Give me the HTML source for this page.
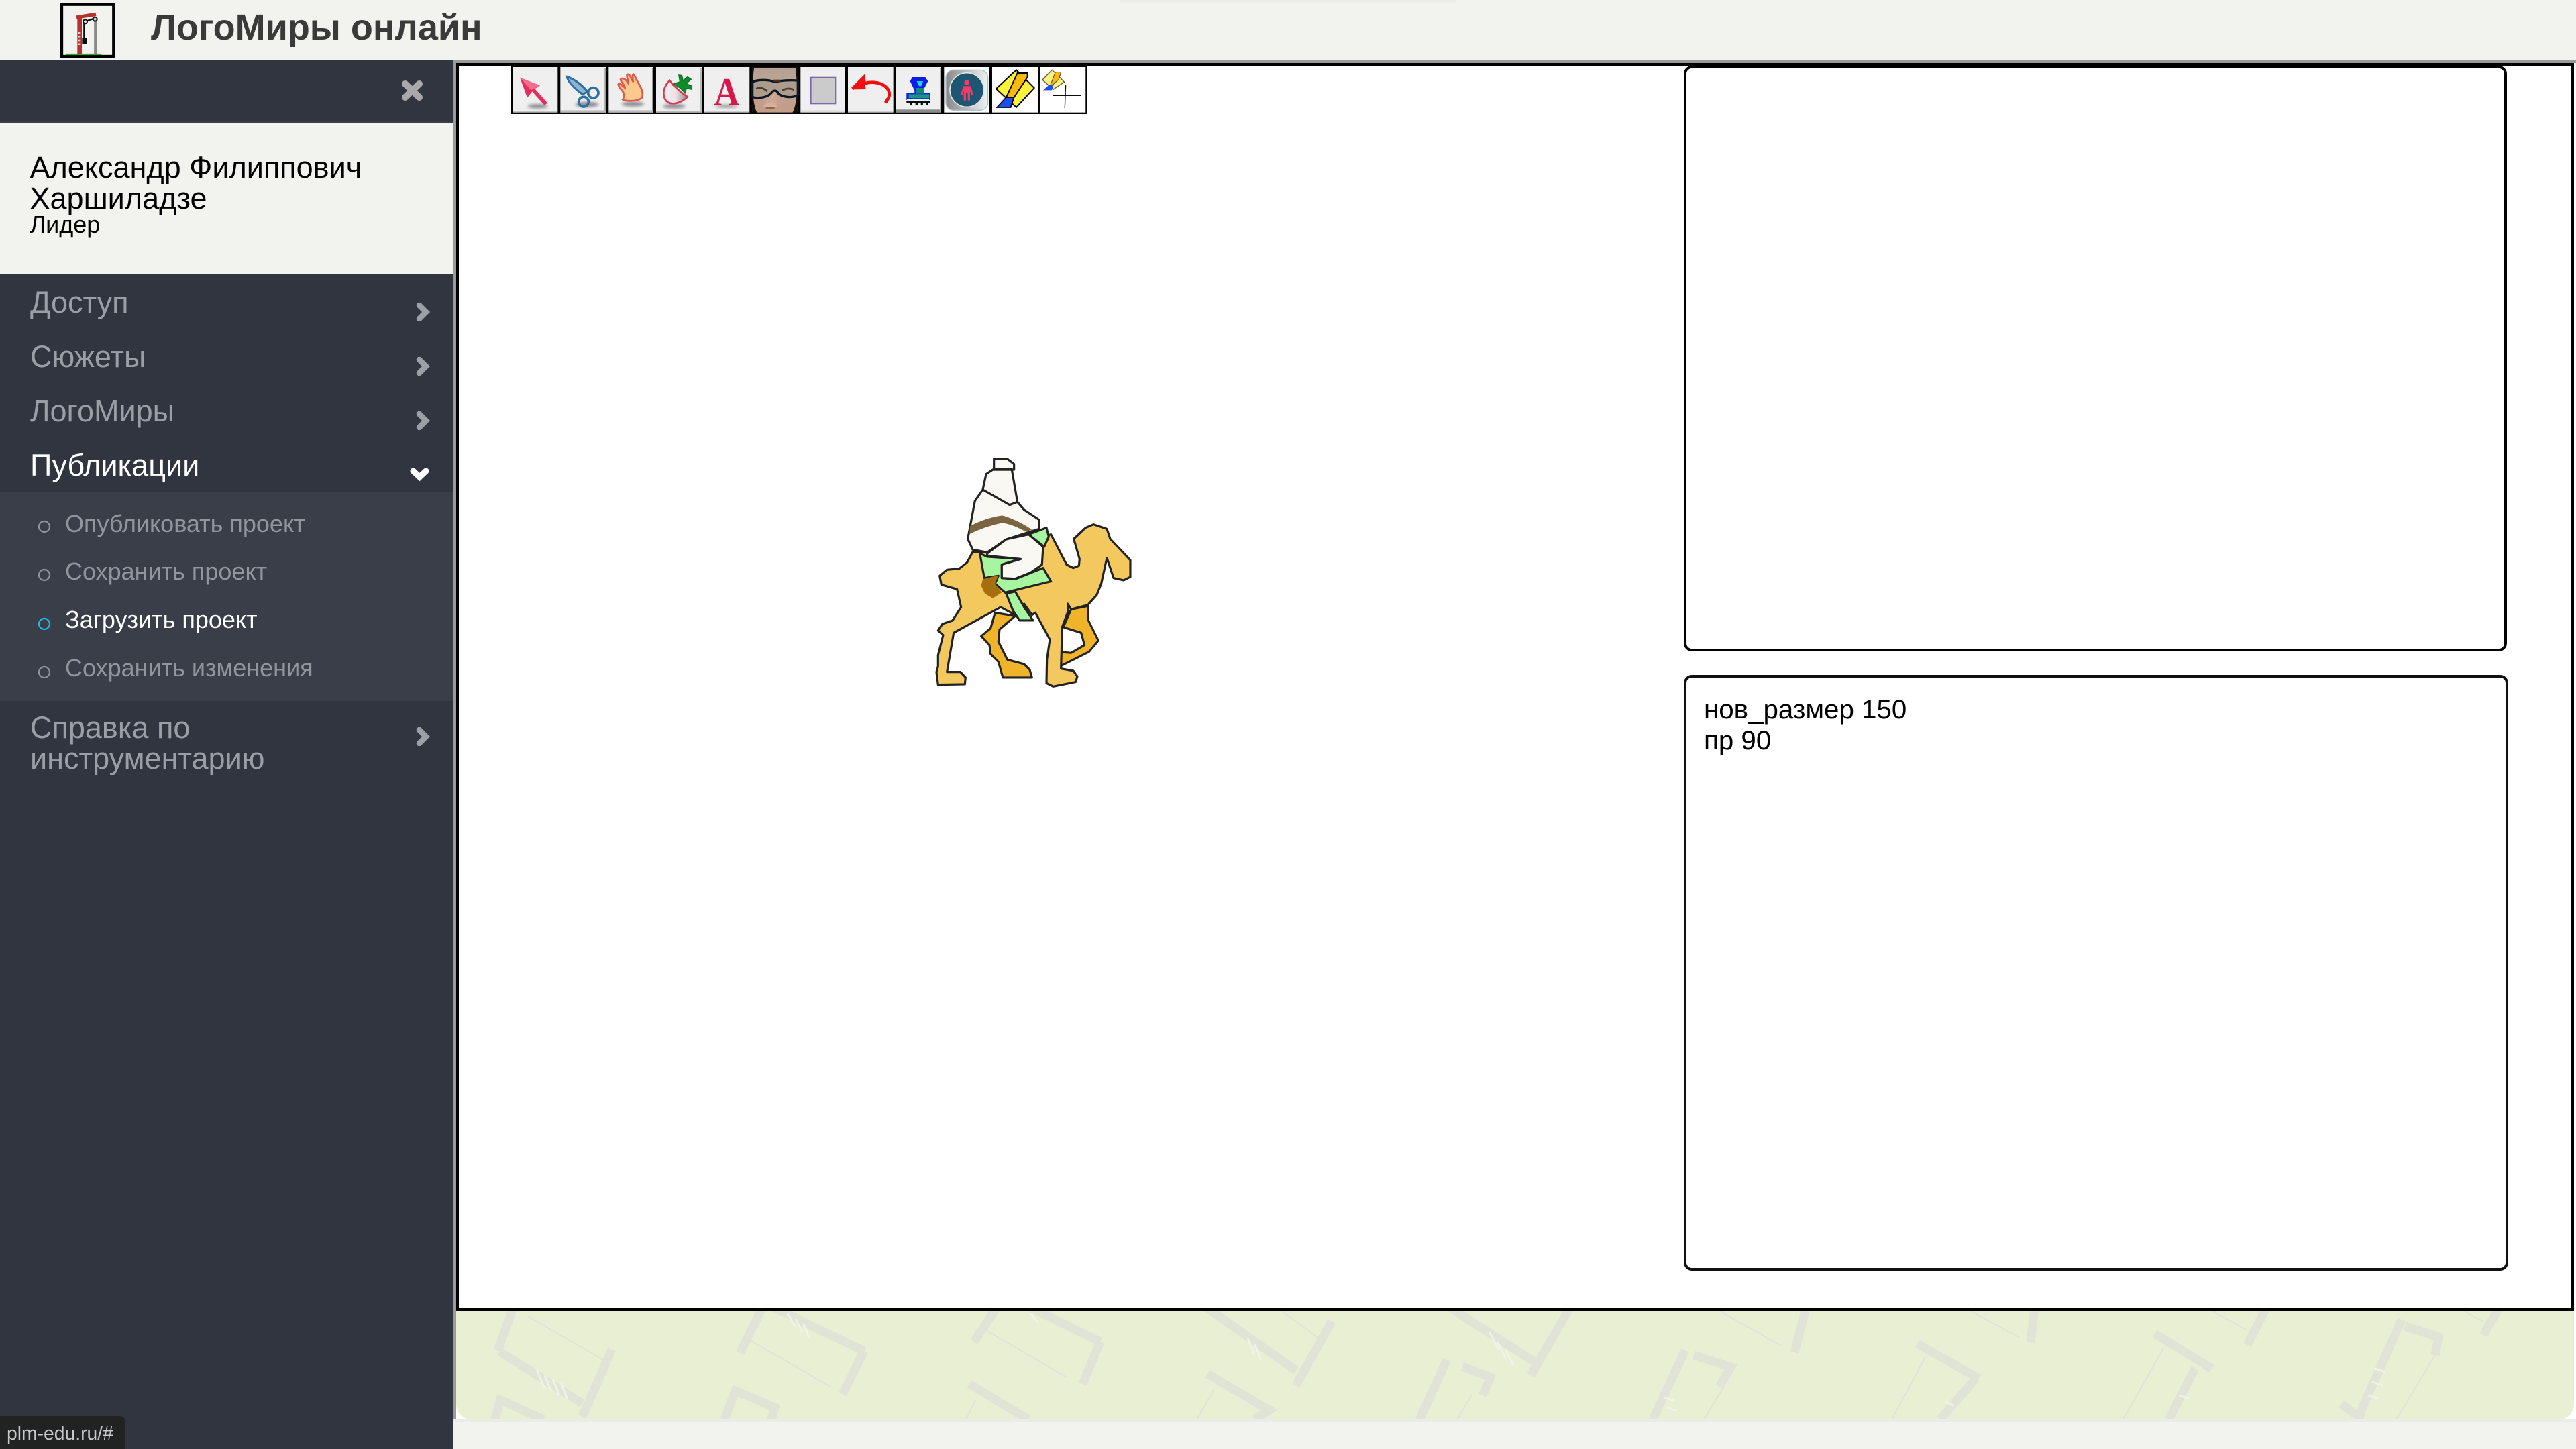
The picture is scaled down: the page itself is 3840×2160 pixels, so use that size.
<!DOCTYPE html>
<html lang="ru"><head><meta charset="utf-8"><title>ЛогоМиры онлайн</title>
<style>
html,body{margin:0;padding:0;width:3840px;height:2160px;overflow:hidden;background:#fff;font-family:"Liberation Sans",Arial,sans-serif}
.r{position:absolute}
.t{position:absolute;white-space:nowrap;line-height:1}
.m{font-size:45px;color:#9a9ea5;left:45px}
.s{font-size:36px;color:#92969c;left:97px}
.p{border:4px solid #000;border-radius:12px;box-sizing:border-box;background:#fff}
svg{position:absolute;left:0;top:0}
</style></head><body>
<div class="r" style="left:0;top:0;width:3840px;height:90px;background:#f2f2ee"></div>
<div class="r" style="left:1670px;top:0;width:500px;height:3px;background:#ecece8"></div>
<div class="r" style="left:676px;top:90px;width:3164px;height:4px;background:#9a9a9a"></div>
<div class="r" style="left:676px;top:90px;width:4px;height:2030px;background:#9a9a9a"></div>
<div class="r" style="left:0;top:90px;width:676px;height:2070px;background:#31353f"></div>
<div class="r" style="left:0;top:181px;width:676px;height:2px;background:#3a3e48"></div>
<div class="r" style="left:0;top:183px;width:676px;height:225px;background:#f2f2ee"></div>
<div class="r" style="left:0;top:733px;width:676px;height:312px;background:#3a3e48"></div>
<div class="r" style="left:676px;top:2116px;width:3164px;height:44px;background:#f2f2ee"></div>
<div class="r" style="left:676px;top:2116px;width:3164px;height:4px;background:#ebebe8"></div>
<div class="r" style="left:680px;top:1954px;width:3157px;height:162px;background:#e8efd3;border-radius:0 0 22px 22px"></div>
<div class="r" style="left:680px;top:94px;width:3157px;height:1860px;box-sizing:border-box;border:4px solid #000;background:#fff"></div>
<div class="r p" style="left:2510px;top:98px;width:1227px;height:873px"></div>
<div class="r p" style="left:2510px;top:1006px;width:1229px;height:888px;border-color:#111"></div>

<svg width="3840" height="2160" viewBox="0 0 3840 2160" xmlns="http://www.w3.org/2000/svg">
<defs>
<filter id="b1" x="-5%" y="-5%" width="110%" height="110%"><feGaussianBlur stdDeviation="0.6"/></filter>
<filter id="c1" x="-5%" y="-5%" width="110%" height="110%"><feGaussianBlur stdDeviation="0.8"/></filter>
<filter id="b2" x="-30%" y="-80%" width="160%" height="260%"><feGaussianBlur stdDeviation="6"/></filter>
<filter id="b3" x="-20%" y="-20%" width="140%" height="140%"><feGaussianBlur stdDeviation="8"/></filter>
<linearGradient id="ap" x1="0" x2="1"><stop offset="0" stop-color="#f8eef2"/><stop offset=".5" stop-color="#efe0e4"/><stop offset="1" stop-color="#8a8a8a"/></linearGradient>
<linearGradient id="pb" x1="0" x2="1"><stop offset="0" stop-color="#888"/><stop offset=".6" stop-color="#c8c8c8"/><stop offset="1" stop-color="#eef3f5"/></linearGradient>
<linearGradient id="fc" x1="0" x2="0" y1="0" y2="1"><stop offset="0" stop-color="#b5a294"/><stop offset=".35" stop-color="#bba596"/><stop offset="1" stop-color="#c49c86"/></linearGradient>
</defs>

<!-- logo -->
<g transform="translate(88,2) scale(.3333)" filter="url(#b1)">
<rect x="12" y="14" width="232" height="232" fill="#f2f2ee" stroke="#000" stroke-width="13"/>
<path d="M92 72V236" stroke="#b5302f" stroke-width="20" fill="none"/>
<path d="M92 136V200" stroke="#e8c8c4" stroke-width="10" stroke-dasharray="8 9" fill="none"/>
<path d="M78 72L165 58" stroke="#b5302f" stroke-width="16" fill="none"/>
<path d="M163 82V236" stroke="#8a8a88" stroke-width="13" fill="none"/>
<path d="M117 90L160 76" stroke="#111" stroke-width="7"/>
<circle cx="117" cy="91" r="9" fill="#ddd" stroke="#111" stroke-width="6"/>
<circle cx="161" cy="80" r="9" fill="#ccc" stroke="#111" stroke-width="6"/>
<path d="M112 95V168" stroke="#111" stroke-width="7"/>
<rect x="103" y="164" width="21" height="27" fill="#111"/>
<path d="M32 237H190" stroke="#39a02e" stroke-width="7"/>
</g>

<!-- sidebar icons -->
<path d="M604 125L625 145M625 125L604 145" stroke="#a9a9a9" stroke-width="10" stroke-linecap="round" fill="none"/>
<g fill="none" stroke="#9b9fa6" stroke-width="8.5" stroke-linecap="round">
<path d="M625 455L635 465L625 475"/><path d="M625 536L635 546L625 556"/><path d="M625 617L635 627L625 637"/><path d="M625 1088L635 1098L625 1108"/>
<path d="M616 702L625.5 711L635 702" stroke="#fff" stroke-width="9"/>
</g>
<g fill="none" stroke="#8f949b" stroke-width="2.2">
<circle cx="66" cy="785" r="8"/><circle cx="66" cy="857" r="8"/><circle cx="66" cy="930" r="8" stroke="#22b8f0"/><circle cx="66" cy="1002" r="8"/>
</g>

<!-- toolbar -->
<rect x="762" y="97" width="859" height="73" fill="#000"/>
<g transform="translate(760,95) scale(.3333)" filter="url(#b1)">
<g fill="#efefef">
<rect x="12" y="15" width="202" height="203"/><rect x="226" y="15" width="204" height="203"/><rect x="442" y="15" width="200" height="203"/><rect x="654" y="15" width="204" height="203"/><rect x="870" y="15" width="202" height="203"/>
</g>
<g fill="none" stroke="#9a9a9a" stroke-width="6">
<path d="M227 212H427V20"/><path d="M443 212H639V20"/><path d="M655 213H855V20" stroke="#bbb"/><path d="M15 214H212" stroke="#c4c4c4"/><path d="M871 214H1070" stroke="#ccc"/>
</g>
<ellipse cx="125" cy="190" rx="45" ry="10" fill="#8d8d96" filter="url(#b2)"/>
<path d="M45 62L135 97L112 112L168 175L155 186L100 124L78 152Z" fill="#e62f5d"/>
<path d="M45 62L135 97L95 118Z" fill="#f2708c"/>
<ellipse cx="345" cy="182" rx="52" ry="12" fill="#8d8d96" filter="url(#b2)"/>
<path d="M255 58C290 68 328 100 348 125L325 137C295 115 262 85 255 58Z" fill="#8fb4d4" stroke="#2d6f9e" stroke-width="9"/>
<circle cx="373" cy="130" r="23" fill="none" stroke="#2d6f9e" stroke-width="11"/>
<circle cx="330" cy="170" r="22" fill="none" stroke="#2d6f9e" stroke-width="11"/>
<ellipse cx="550" cy="180" rx="50" ry="11" fill="#8d8d96" filter="url(#b2)"/>
<path d="M505 160C520 168 575 170 592 150C600 120 580 100 555 48C548 42 548 60 552 82C540 60 535 45 525 48C520 55 530 75 530 88C520 70 505 60 495 70C495 80 515 95 515 108C500 95 490 85 485 92C490 120 525 125 505 160Z" fill="#fdc98c" stroke="#dd5a4e" stroke-width="8"/>
<ellipse cx="735" cy="190" rx="50" ry="10" fill="#8d8d96" filter="url(#b2)"/>
<path d="M715 75C690 100 680 130 695 160C715 190 760 180 795 148L770 130L730 95Z" fill="url(#ap)" stroke="#d53a54" stroke-width="8"/>
<path d="M730 90L760 80L755 50L770 52L775 75L795 58L812 70L790 88L815 100L812 115L790 110L785 132L760 108Z" fill="#0f8a2c" stroke="#0f6a20" stroke-width="3"/>
<ellipse cx="970" cy="190" rx="50" ry="7" fill="#9a9a9a" filter="url(#b2)"/>
<text transform="translate(970,186) scale(.88,1)" text-anchor="middle" font-family="Liberation Serif,serif" font-weight="700" font-size="178" fill="#d8124a">A</text>
<rect x="1082" y="15" width="206" height="203" fill="#120e0a"/>
<path d="M1092 20H1278C1286 90 1288 170 1265 218H1105C1083 170 1084 90 1092 20Z" fill="url(#fc)"/>
<path d="M1178 125L1140 185H1195L1188 125Z" fill="#cfa895" filter="url(#b3)"/>
<ellipse cx="1165" cy="188" rx="30" ry="12" fill="#d8b09c" filter="url(#b1)"/>
<ellipse cx="1165" cy="198" rx="22" ry="4" fill="#8c6654" filter="url(#b1)"/>
<path d="M1085 82C1110 68 1165 72 1185 82C1210 74 1265 72 1288 76V140C1265 155 1215 150 1200 132C1195 118 1180 115 1170 130C1150 155 1100 155 1085 148Z" fill="#ab9c8b" stroke="#0e1722" stroke-width="10"/>
<path d="M1102 112C1120 102 1140 112 1152 124M1218 120C1235 108 1255 110 1270 116" fill="none" stroke="#4a3e34" stroke-width="8"/>
<path d="M1180 76H1210" stroke="#4a2e1e" stroke-width="10"/>
</g>
<g transform="translate(1190,95) scale(.3333)" filter="url(#b1)">
<g fill="#efefef">
<rect x="10" y="15" width="200" height="203"/><rect x="222" y="15" width="203" height="203"/><rect x="438" y="15" width="200" height="203"/>
<rect x="652" y="15" width="203" height="203" fill="#fff"/><rect x="867" y="15" width="205" height="203" fill="#fff"/><rect x="1080" y="15" width="205" height="203" fill="#fff"/>
</g>
<path d="M10 212H210M222 214H425" stroke="#cfcfcf" stroke-width="6"/>
<rect x="438" y="205" width="200" height="13" fill="#8a8a8a"/><path d="M636 20V216" stroke="#aaa" stroke-width="5"/>
<rect x="56" y="62" width="110" height="116" fill="#cbcbcb" stroke="#7c6aa8" stroke-width="6"/>
<path d="M242 112L292 62L296 88C360 70 420 105 405 150L390 175" fill="none" stroke="#f50f0f" stroke-width="14"/>
<path d="M242 115L292 62L302 114Z" fill="#f50f0f"/>
<path d="M510 60H568L580 78L558 120V132H590V162H484V132H520V120L500 78Z" fill="#0f1fe8"/>
<path d="M530 78H558L550 100H540Z" fill="#18d4d4"/><path d="M526 108H564V134H526Z" fill="#0f8a7c"/>
<rect x="494" y="136" width="92" height="18" fill="#1d9185"/><rect x="486" y="158" width="100" height="8" fill="#e5f5f0"/>
<path d="M484 168H590V176H580V184H570V176H558V184H548V176H534V184H524V176H510V184H500V176H484Z" fill="#111"/>
<rect x="660" y="28" width="188" height="180" rx="35" fill="url(#pb)" stroke="#a8c4d0" stroke-width="4"/>
<circle cx="754" cy="117" r="76" fill="#1d5672" stroke="#e4e4e4" stroke-width="5"/>
<circle cx="754" cy="85" r="12" fill="#f33b6a"/>
<path d="M738 100H772L782 138H772L768 118V164H758V132H750V164H740V118L736 138H726Z" fill="#f33b6a"/>
<path d="M975 28L1055 108L975 195L885 112Z" fill="#fff23a" stroke="#000" stroke-width="6"/>
<path d="M980 42H1025V60L965 150H930Z" fill="#fcb90f" stroke="#000" stroke-width="6"/>
<path d="M930 150H965L950 195H888Z" fill="#1a4ff0" stroke="#000" stroke-width="5"/>
<path d="M1135 28L1190 82L1140 115L1092 72Z" fill="#fff27a" stroke="#555" stroke-width="4"/>
<path d="M1150 38H1175L1165 70L1138 94H1128Z" fill="#fcb90f" stroke="#444" stroke-width="3"/>
<path d="M1122 94H1142L1134 118H1095Z" fill="#1a4ff0"/>
<path d="M1196 95L1192 198M1137 142H1264" stroke="#111" stroke-width="4"/>
</g>

<!-- camel -->
<g transform="translate(1370,660) scale(.3333)" stroke="#222" stroke-width="9.5" stroke-linejoin="round" filter="url(#c1)">
<path d="M340 760L430 775L360 835L355 890L395 970L470 990L495 1015L505 1050L375 1050L355 980L320 945L315 905L278 865L320 830Z" fill="#f0b429"/>
<path d="M680 745L755 730L755 790L802 885L760 935L630 1000L628 935L680 940L740 905L725 850L645 825Z" fill="#f0b429"/>
<path d="M240 488L272 490L590 410L660 545L690 560L715 550L718 520L692 430L745 380L780 365L840 385L855 430L945 525L945 600L915 615L870 605L840 515L815 630L795 680L755 725L680 745L665 720L668 750L640 825L635 1010L690 1020L708 1045L700 1070L600 1090L570 1075L572 970L585 880L520 760L505 770L470 720L430 770L365 735L155 850L125 1025L185 1025L208 1050L205 1080L85 1082L78 1025L85 1000L85 950L108 860L85 840L105 810L150 795L188 735L170 655L100 635L92 595L125 568L180 563L215 535Z" fill="#f2c85e"/>
<path d="M390 675L430 665L470 735L510 795L450 795L420 750Z" fill="#a8f5a0"/>
<path d="M272 495L305 510L450 520L370 545L370 605L430 610L555 560L590 620L385 670L340 630L355 595L292 605Z" fill="#a8f5a0"/>
<path d="M285 610L355 592L340 630L370 670L330 695L295 675L278 640Z" fill="#a66e0a" stroke="none"/>
<path d="M330 120H415L440 265L470 300L538 345L538 385L490 400L390 432L305 490L240 478L218 430L250 260L285 210L300 140Z" fill="#faf8f2"/>
<path d="M228 372Q300 335 372 325Q430 340 505 388L478 398Q420 365 372 358Q300 372 226 408Z" fill="#7a6540" stroke="none"/>
<path d="M490 410L570 380L580 420L560 465Z" fill="#a8f5a0"/>
<path d="M305 495L390 432L490 410L555 465L550 545L500 580L430 608L370 605L370 545L455 520L305 505Z" fill="#faf8f2"/>
<path d="M335 72H395L425 95V120H335Z" fill="#faf8f2"/>
<path d="M330 118H418" stroke-width="12" fill="none"/>
<path d="M285 210L405 278L440 265" fill="none"/>
</g>

<!-- background pattern -->
<clipPath id="g"><rect x="680" y="1954" width="3157" height="162"/></clipPath>
<g clip-path="url(#g)" fill="none" stroke="#e0e3d5" stroke-linecap="butt">
<g stroke-width="13">
<path d="M765 1950L742 2013"/><path d="M745 2015L868 2092"/><path d="M912 2012L868 2112"/>
<path d="M1136 1950L1103 2017"/><path d="M1155 1950L1288 2014"/><path d="M1288 2014L1256 2078"/>
<path d="M1485 1950L1452 2000"/><path d="M1538 1950L1640 2000"/><path d="M1640 2000L1614 2063"/>
<path d="M1800 1950L1932 2043"/><path d="M1985 1970L1932 2065"/>
<path d="M738 2116L746 2087L810 2116"/><path d="M1080 2116L1096 2073L1155 2098L1150 2116"/>
<path d="M1445 2063L1533 2116"/><path d="M1800 2048L1892 2102L1870 2116"/>
<path d="M2163 1950L2287 2030"/><path d="M2340 1950L2282 2050"/>
<path d="M2157 2027L2116 2116"/><path d="M2180 2037L2222 2053L2210 2080"/>
<path d="M2692 1950L2675 2016"/><path d="M3033 1950L3027 2001"/>
<path d="M2512 2013L2464 2116"/><path d="M2525 2020L2580 2038L2563 2067"/>
<path d="M2858 2003L2950 2055"/><path d="M2945 2055L2892 2116"/>
<path d="M3212 1988L3297 2040"/><path d="M3272 2040L3233 2116"/>
<path d="M3378 1950L3350 2005"/><path d="M3580 1967L3514 2116"/><path d="M3585 1977L3635 1993L3630 2020"/><path d="M3490 2093L3522 2116"/>
<path d="M3725 1950L3702 1990"/>
</g>
<g stroke-width="2">
<path d="M787 1962L904 2030"/><path d="M1118 1998L1238 2067"/><path d="M1470 1983L1590 2053"/><path d="M1910 1954L1973 2000"/>
<path d="M1454 2087L1440 2116"/><path d="M1810 2071L1784 2116"/>
<path d="M2563 1954L2657 2007"/><path d="M2937 1954L3009 1993"/><path d="M3297 1954L3350 1983"/><path d="M3672 1954L3702 1970"/>
<path d="M2194 2080L2172 2116"/><path d="M2570 2067L2540 2116"/><path d="M2870 2023L2820 2116"/><path d="M3225 2010L3165 2116"/><path d="M3630 2020L3572 2116"/>
</g>
<g stroke="#f2f3e8" stroke-width="3">
<path d="M800 2042L812 2070M812 2050L822 2074M824 2056L834 2080M836 2062L846 2086"/>
<path d="M1174 1958L1186 1978M1186 1966L1196 1986M1198 1974L1206 1994"/>
<path d="M1537 1958L1547 1972"/><path d="M1860 1995L1870 2020M1870 2003L1880 2027"/>
<path d="M2220 1985L2234 2012M2232 2000L2244 2025M2244 2012L2256 2035"/>
<path d="M2480 2083L2496 2088M2484 2098L2500 2103"/>
<path d="M2900 2090L2912 2095"/><path d="M3248 2080L3264 2085"/><path d="M3540 2040L3556 2045M3536 2060L3552 2065M3530 2080L3546 2085"/>
</g>
</g>
</svg>

<div class="t" style="left:225px;top:14.3px;font-size:54px;font-weight:700;color:#3a3a3a">ЛогоМиры онлайн</div>
<div class="t" style="left:44.5px;top:226.9px;font-size:45px;color:#000">Александр Филиппович</div>
<div class="t" style="left:44.5px;top:272.9px;font-size:45px;color:#000">Харшиладзе</div>
<div class="t" style="left:44.5px;top:316.5px;font-size:36px;color:#000">Лидер</div>
<div class="t m" style="top:427.9px">Доступ</div>
<div class="t m" style="top:508.9px">Сюжеты</div>
<div class="t m" style="top:589.9px">ЛогоМиры</div>
<div class="t m" style="top:670.9px;color:#fff">Публикации</div>
<div class="t s" style="top:762.5px">Опубликовать проект</div>
<div class="t s" style="top:833.5px">Сохранить проект</div>
<div class="t s" style="top:905.5px;color:#fff">Загрузить проект</div>
<div class="t s" style="top:977.5px">Сохранить изменения</div>
<div class="t m" style="top:1061.9px">Справка по</div>
<div class="t m" style="top:1107.9px">инструментарию</div>
<div class="t" style="left:2540px;top:1037.8px;font-size:40.3px;color:#000">нов_размер 150</div>
<div class="t" style="left:2540px;top:1084px;font-size:40.3px;color:#000">пр 90</div>
<div class="r" style="left:0;top:2111px;width:187px;height:49px;background:#212323;border-radius:0 8px 0 0"></div>
<div class="t" style="left:10px;top:2122px;font-size:28.3px;color:#c6c8ca">plm-edu.ru/#</div>
</body></html>
